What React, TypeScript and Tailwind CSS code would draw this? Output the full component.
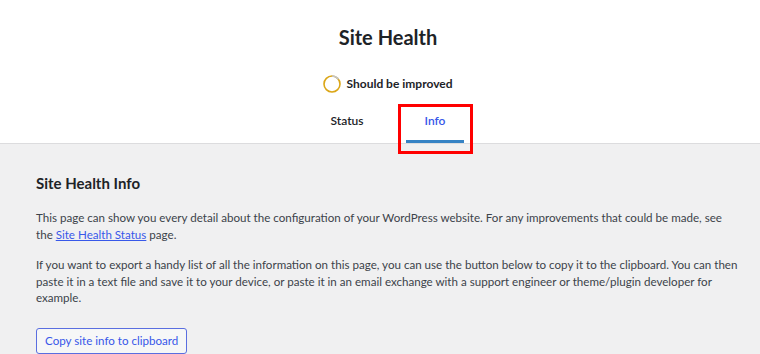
import React from 'react';

const FONT = { fontFamily: 'Lato, "Noto Sans", Arial, sans-serif' };

const StatusCircle: React.FC = () => (
    <svg width="18" height="18" viewBox="0 0 18 18" className="shrink-0">
        <circle cx="9" cy="9" r="8" fill="none" stroke="#dba617" strokeWidth="1.6" />
        <path d="M9 1 A8 8 0 0 1 15.5 4.3" fill="none" stroke="#c3c4c7" strokeWidth="1.6" />
    </svg>
);

export default function App() {
    return (
        <div className="w-[760px] h-[354px] overflow-hidden bg-[#f0f0f1] text-[#3c434a]" style={FONT}>
            {/* Header */}
            <header className="bg-white border-b border-[#dcdcde] pl-4">
                <h1 className="pt-[22px] text-center text-[20px] leading-[30px] font-bold text-[#1d2327]">
                    Site Health
                </h1>
                <div className="mt-[23px] flex items-center justify-center gap-[5px]">
                    <StatusCircle />
                    <span className="text-[12px] leading-[18px] font-bold text-[#1d2327]">Should be improved</span>
                </div>
                <nav className="mt-[19px] flex justify-center gap-[23px] text-[12px] font-semibold">
                    <a className="px-[19px] pb-[13px] leading-[18px] text-[#1d2327]">Status</a>
                    <a className="relative px-[19px] pb-[10px] leading-[18px] text-[#3858e9] border-b-[3px] border-[#3582c4]">
                        Info
                        {/* annotation box */}
                        <span className="absolute left-[-8px] right-[-9px] top-[-8px] bottom-[-14px] border-[3px] border-[#ff0000] pointer-events-none" />
                    </a>
                </nav>
            </header>

            {/* Body */}
            <main className="pl-9 pr-2 pt-[28px] text-[11.6px]">
                <h2 className="text-[15px] leading-[22px] font-bold text-[#1d2327]">Site Health Info</h2>
                <p className="mt-[16px] leading-[16.5px]">
                    This page can show you every detail about the configuration of your WordPress website. For any improvements that could be made, see
                    <br />
                    the <a className="text-[#3858e9] underline">Site Health Status</a> page.
                </p>
                <p className="mt-[14px] leading-[16.5px]">
                    If you want to export a handy list of all the information on this page, you can use the button below to copy it to the clipboard. You can then
                    <br />
                    paste it in a text file and save it to your device, or paste it in an email exchange with a support engineer or theme/plugin developer for
                    <br />
                    example.
                </p>
                <button className="mt-[21px] h-[26px] px-[8px] rounded-[3px] border border-[#5a6ee0] bg-[#f6f7f7] text-[#3858e9]">
                    Copy site info to clipboard
                </button>
            </main>
        </div>
    );
}
